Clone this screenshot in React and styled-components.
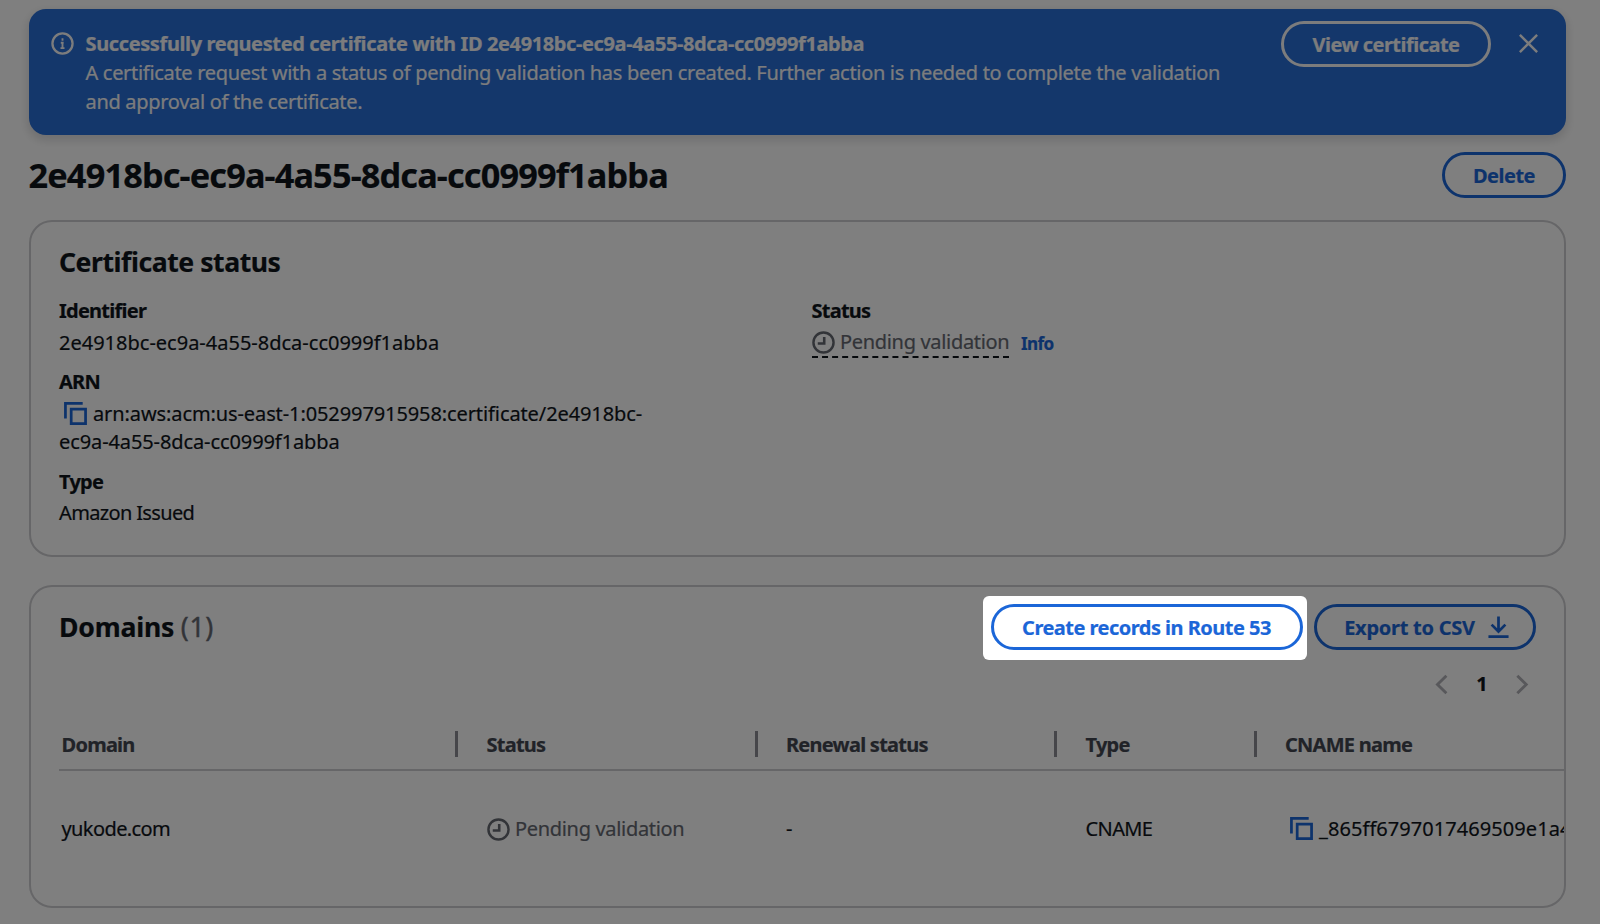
import React, { useState } from "react";
import styled, { createGlobalStyle } from "styled-components";

const CERT_ID = "2e4918bc-ec9a-4a55-8dca-cc0999f1abba";

const columns = ["Domain", "Status", "Renewal status", "Type", "CNAME name"];

const InfoIcon = () => (
  <Icon size={23} viewBox="0 0 16 16">
    <circle cx="8" cy="8" r="7" />
    <path d="M8 11.6V7.2M8 6V4.4M6.6 11.2h2.8M6.8 7.5H8.8" strokeWidth="1.3" />
  </Icon>
);

const ClockIcon = () => (
  <Icon size={23} viewBox="0 0 16 16">
    <circle cx="8" cy="8" r="7" strokeWidth="1.7" />
    <path d="M8.5 4.2v4.5H4" strokeWidth="1.8" />
  </Icon>
);

const CopyIcon = () => (
  <Icon size={23} viewBox="0 0 16 16">
    <path d="M5 5h10v10H5z" strokeWidth="1.9" />
    <path d="M1 11.5V1h12" strokeWidth="1.9" />
  </Icon>
);

const CloseIcon = () => (
  <Icon size={23} viewBox="0 0 16 16">
    <path d="m2 2 12 12M14 2 2 14" strokeWidth="1.7" />
  </Icon>
);

const DownloadIcon = () => (
  <Icon size={23} viewBox="0 0 16 16">
    <path d="M1 15h14M8 1v10.5M3.2 6.7 8 11.5l4.8-4.8" strokeWidth="1.9" />
  </Icon>
);

const ArrowIcon = ({ right }) => (
  <Icon size={23} viewBox="0 0 16 16">
    <path
      d={right ? "m4.4 1.9 6.2 6.1-6.2 6.1" : "M11.4 1.9 5.2 8l6.2 6.1"}
      strokeWidth="2"
    />
  </Icon>
);

const App = () => {
  const [page] = useState(1);

  return (
    <Page>
      <GlobalStyle />
      <Flash>
        <InfoIcon />
        <FlashText>
          <FlashTitle>Successfully requested certificate with ID {CERT_ID}</FlashTitle>
          <FlashBody>
            A certificate request with a status of pending validation has been
            created. Further action is needed to complete the validation
            <br />
            and approval of the certificate.
          </FlashBody>
        </FlashText>
        <FlashButton>View certificate</FlashButton>
        <Dismiss>
          <CloseIcon />
        </Dismiss>
      </Flash>

      <TitleRow>
        <Title>{CERT_ID}</Title>
        <Button width={124}>Delete</Button>
      </TitleRow>

      <Card height={337}>
        <CardTitle spacing={-0.45}>Certificate status</CardTitle>
        <Details>
          <Column>
            <Field>
              <Label>Identifier</Label>
              <Value spacing={0}>{CERT_ID}</Value>
            </Field>
            <Field>
              <Label>ARN</Label>
              <Value spacing={-0.1}>
                <Copy>
                  <CopyIcon />
                </Copy>
                arn:aws:acm:us-east-1:052997915958:certificate/2e4918bc-
                <br />
                ec9a-4a55-8dca-cc0999f1abba
              </Value>
            </Field>
            <Field>
              <Label>Type</Label>
              <Value spacing={-0.65}>Amazon Issued</Value>
            </Field>
          </Column>
          <Column>
            <Field>
              <Label>Status</Label>
              <StatusLine>
                <Pending underlined>
                  <ClockIcon />
                  Pending validation
                </Pending>
                <InfoLink>Info</InfoLink>
              </StatusLine>
            </Field>
          </Column>
        </Details>
      </Card>

      <Card height={323} last>
        <DomainsHeader>
          <CardTitle spacing={-0.2}>
            Domains <Counter>(1)</Counter>
          </CardTitle>
          <Actions>
            <Spotlight>
              <Button width={312}>Create records in Route 53</Button>
            </Spotlight>
            <ExportButton width={222}>
              Export to CSV
              <DownloadIcon />
            </ExportButton>
          </Actions>
        </DomainsHeader>
        <Pagination>
          <Arrow>
            <ArrowIcon />
          </Arrow>
          <PageNumber>{page}</PageNumber>
          <Arrow>
            <ArrowIcon right />
          </Arrow>
        </Pagination>
        <Table>
          <HeadRow>
            {columns.map((name, i) => (
              <HeadCell key={name} last={i === columns.length - 1}>
                {name}
              </HeadCell>
            ))}
          </HeadRow>
          <Row>
            <Cell>yukode.com</Cell>
            <Cell>
              <Pending>
                <ClockIcon />
                Pending validation
              </Pending>
            </Cell>
            <Cell>-</Cell>
            <Cell>CNAME</Cell>
            <Cell>
              <Value spacing={0.06}>
                <Copy>
                  <CopyIcon />
                </Copy>
                _865ff6797017469509e1a4
              </Value>
            </Cell>
          </Row>
        </Table>
      </Card>
    </Page>
  );
};

const GlobalStyle = createGlobalStyle`
  * {
    box-sizing: border-box;
  }
  body {
    margin: 0;
    overflow: hidden;
    background-color: white;
    color: #0f141a;
    font-family: "Noto Sans", "Open Sans", sans-serif;
    font-size: 20px;
    line-height: 28.57px;
    letter-spacing: -0.6px;
    -webkit-text-stroke: 0.2px;
  }
`;

const Icon = styled.svg`
  flex: none;
  width: ${(props) => props.size}px;
  height: ${(props) => props.size}px;
  fill: none;
  stroke: currentColor;
  stroke-width: 1.6;
`;

const Page = styled.div`
  height: 924px;
  padding: 9px 34px 0 28.5px;
  overflow: hidden;
`;

const Flash = styled.div`
  display: flex;
  align-items: flex-start;
  height: 126px;
  padding: 12px 26px 0 22px;
  border-radius: 17px;
  background-color: #286ed6;
  color: #f9f9fa;
  box-shadow: 0 4px 8px 2px rgba(0, 7, 22, 0.12);

  > svg {
    margin-top: 11px;
  }
`;

const FlashText = styled.div`
  flex: 1;
  margin-left: 12px;
  padding-top: 9px;
`;

const FlashTitle = styled.div`
  font-weight: 700;
  letter-spacing: -0.38px;
`;

const FlashBody = styled.div`
  margin-top: 0.5px;
  letter-spacing: -0.31px;
  white-space: nowrap;
`;

const Button = styled.button`
  display: flex;
  align-items: center;
  justify-content: center;
  gap: 12px;
  flex: none;
  width: ${(props) => props.width}px;
  height: 45.5px;
  padding: 3px 0 0;
  border: 3px solid currentColor;
  border-radius: 23px;
  background: none;
  color: #1b66d8;
  font: inherit;
  font-weight: 700;
  letter-spacing: -0.52px;
  white-space: nowrap;
`;

const FlashButton = styled(Button)`
  width: 210px;
  color: #f9f9fa;
`;

const ExportButton = styled(Button)`
  letter-spacing: -0.25px;

  svg {
    margin: -3px -5px 0 0;
  }
`;

const Dismiss = styled.span`
  display: flex;
  margin: 11px 0 0 26px;
`;

const TitleRow = styled.div`
  display: flex;
  justify-content: space-between;
  height: 85px;
  padding-top: 17px;
`;

const Title = styled.h1`
  margin: 0;
  font-size: 34.3px;
  line-height: 45px;
  font-weight: 700;
  letter-spacing: -0.86px;
`;

const Card = styled.section`
  height: ${(props) => props.height}px;
  margin-top: ${(props) => (props.last ? "28px" : 0)};
  padding-left: 28.5px;
  border: 2px solid #cdcdd0;
  border-radius: 23px;
`;

const CardTitle = styled.h2`
  margin: 0;
  padding-top: 22px;
  font-size: 26.6px;
  line-height: 36px;
  font-weight: 700;
  letter-spacing: ${(props) => props.spacing}px;
`;

const Counter = styled.span`
  color: #656871;
  font-weight: 400;
  letter-spacing: 0.6px;
  -webkit-text-stroke: 0.4px;
`;

const Details = styled.div`
  display: grid;
  grid-template-columns: 752.5px 1fr;
  margin-top: 17px;
`;

const Column = styled.div`
  display: flex;
  flex-direction: column;
  gap: 11px;
`;

const Field = styled.div`
  white-space: nowrap;
`;

const Label = styled.div`
  margin-bottom: 3px;
  font-weight: 700;
  letter-spacing: -0.75px;
`;

const Value = styled.div`
  letter-spacing: ${(props) => props.spacing}px;
`;

const Copy = styled.span`
  display: inline-flex;
  margin: 0 6px 0 5px;
  color: #1b66d8;
  vertical-align: -4px;
`;

const StatusLine = styled.div`
  display: flex;
  align-items: flex-start;
`;

const Pending = styled.span`
  display: flex;
  align-items: center;
  gap: 5.5px;
  width: fit-content;
  color: #656871;
  letter-spacing: -0.32px;
  ${(props) =>
    props.underlined && "height: 29px; border-bottom: 2px dashed #0f141a;"}
`;

const InfoLink = styled.a`
  margin: 1px 0 0 11.5px;
  color: #1b66d8;
  font-size: 17.1px;
  font-weight: 700;
`;

const DomainsHeader = styled.div`
  display: flex;
  justify-content: space-between;
  padding-right: 28.5px;
`;

const Actions = styled.div`
  display: flex;
  gap: 11px;
  padding-top: 17px;
`;

/* dims everything around the highlighted button */
const Spotlight = styled.div`
  position: relative;
  z-index: 1;

  &::before {
    content: "";
    position: absolute;
    inset: -8px -4px -10px -8px;
    border-radius: 6px;
    box-shadow: 0 0 0 2000px rgba(0, 0, 0, 0.5);
    pointer-events: none;
  }
`;

const Pagination = styled.div`
  display: flex;
  justify-content: flex-end;
  align-items: center;
  height: 29px;
  margin-top: 20px;
  padding-right: 30.5px;
`;

const Arrow = styled.span`
  display: flex;
  color: #b0b0b6;
`;

const PageNumber = styled.span`
  width: 57.5px;
  text-align: center;
  font-weight: 700;
`;

const Table = styled.div`
  margin-top: 20px;
  overflow: hidden;
`;

const Row = styled.div`
  display: grid;
  grid-template-columns: 399px 299.5px 299.5px 199.5px 1fr;
  align-items: center;
  height: 117px;
`;

const HeadRow = styled(Row)`
  height: 52px;
  border-bottom: 2px solid #cdcdd0;
`;

const Cell = styled.div`
  min-width: 0;
  padding-left: 28.5px;
  white-space: nowrap;

  &:first-child {
    padding-left: 2.5px;
  }
`;

const HeadCell = styled(Cell)`
  padding-top: 1px;
  line-height: 25px;
  border-right: ${(props) => (props.last ? "none" : "3px solid #8c8c94")};
  color: #424650;
  font-weight: 700;
  letter-spacing: -0.75px;
`;

export default App;
